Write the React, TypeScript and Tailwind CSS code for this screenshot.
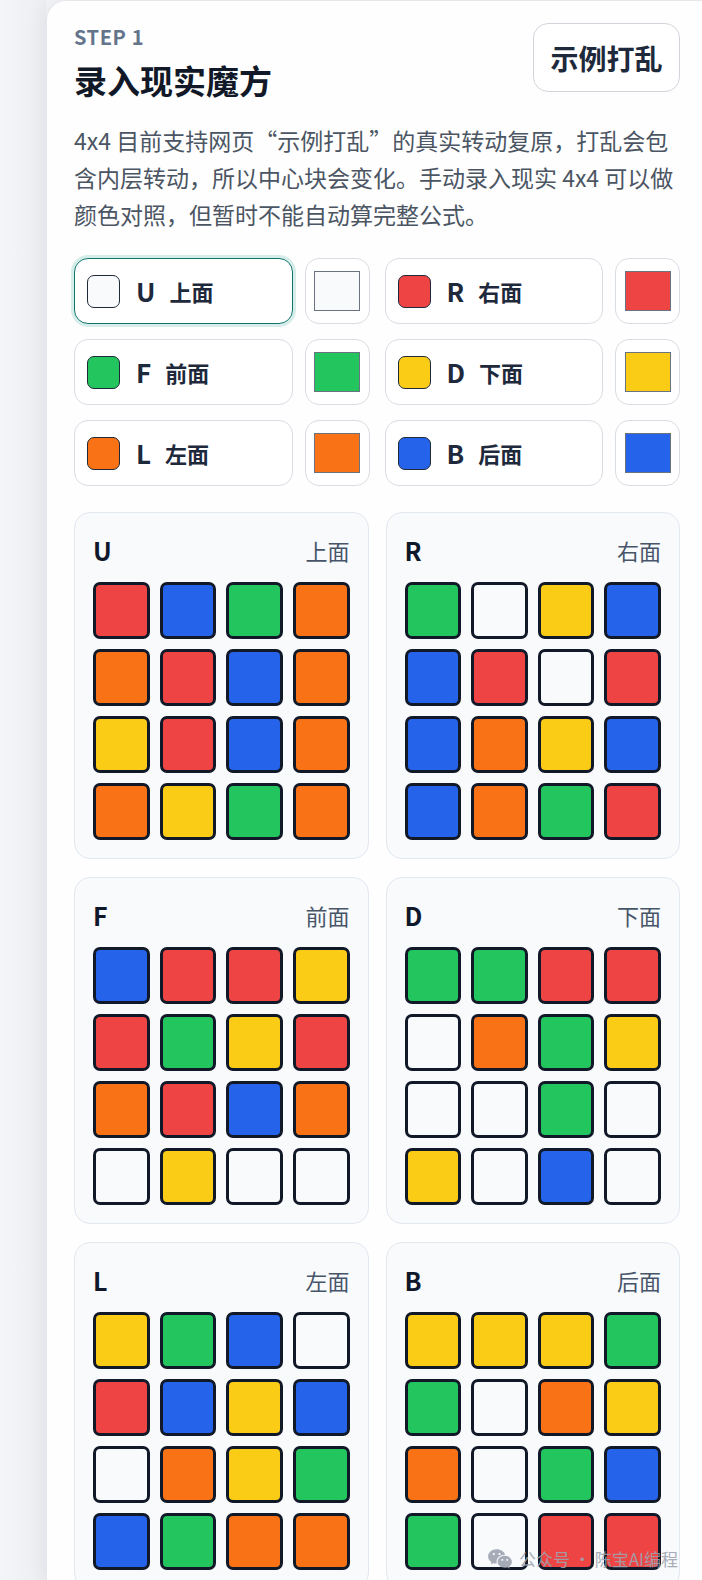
import React, { useState } from 'react';
import { RiWechatFill } from 'react-icons/ri';

type Color = 'W' | 'R' | 'G' | 'Y' | 'O' | 'B';

const FILL: Record<Color, string> = {
  W: 'bg-[#f8fafc]',
  R: 'bg-[#ef4444]',
  G: 'bg-[#22c55e]',
  Y: 'bg-[#facc15]',
  O: 'bg-[#f97316]',
  B: 'bg-[#2563eb]',
};

// face picker entries
const FACES: { key: string; name: string; color: Color }[] = [
  { key: 'U', name: '上面', color: 'W' },
  { key: 'R', name: '右面', color: 'R' },
  { key: 'F', name: '前面', color: 'G' },
  { key: 'D', name: '下面', color: 'Y' },
  { key: 'L', name: '左面', color: 'O' },
  { key: 'B', name: '后面', color: 'B' },
];

// scrambled 4x4 state, row by row
const STATE: Record<string, string> = {
  U: 'RBGO' + 'ORBO' + 'YRBO' + 'OYGO',
  R: 'GWYB' + 'BRWR' + 'BOYB' + 'BOGR',
  F: 'BRRY' + 'RGYR' + 'ORBO' + 'WYWW',
  D: 'GGRR' + 'WOGY' + 'WWGW' + 'YWBW',
  L: 'YGBW' + 'RBYB' + 'WOYG' + 'BGOO',
  B: 'YYYG' + 'GWOY' + 'OWGB' + 'GWRR',
};

const FacePanel: React.FC<{ face: string; name: string }> = ({ face, name }) => {
  const cells = STATE[face].split('') as Color[];
  return (
    <div className="rounded-[16px] border border-[#e2e8f0] bg-[#f8fafc] px-[18px] pt-[22px] pb-[18px]">
      <div className="flex items-center justify-between h-[30px]">
        <span className="text-[25px] font-bold text-[#0f172a] leading-none">{face}</span>
        <span className="text-[22px] text-[#475569] leading-none">{name}</span>
      </div>
      <div className="mt-[17px] grid grid-cols-4 gap-[10px]">
        {cells.map((c, i) => (
          <div
            key={i}
            className={`h-[57px] rounded-[7px] border-[3px] border-[#111827] ${FILL[c]}`}
          />
        ))}
      </div>
    </div>
  );
};

export default function App() {
  const [active, setActive] = useState('U');

  return (
    <div
      className="relative flex h-[1580px] bg-[#f2f4f7] overflow-hidden"
      style={{ fontFamily: '"Noto Sans CJK SC", "Noto Sans", sans-serif' }}
    >
      <div className="w-[46px] shrink-0 bg-gradient-to-r from-[#f4f5f8] to-[#eceef2]" />

      {/* Step card */}
      <div className="flex-1 rounded-tl-[20px] border-l border-t border-[#e5e7eb] bg-[#fefefe] pl-[27px] pr-[22px] pt-[24px] shadow-[-4px_0_18px_rgba(15,23,42,0.05)]">
        <div className="flex items-start justify-between">
          <div>
            <div className="text-[20px] leading-[24px] font-bold tracking-[0.03em] text-[#64748b]">STEP 1</div>
            <h1 className="mt-[8px] text-[33px] leading-[46px] font-bold text-[#111827]">录入现实魔方</h1>
          </div>
          <button className="-mt-[2px] h-[69px] w-[147px] rounded-[15px] border border-[#d1d5db] bg-white text-[28px] font-bold text-[#1e293b]">
            示例打乱
          </button>
        </div>

        <p className="mt-[19px] text-[23px] leading-[37px] text-[#4b5563]">
          4x4 目前支持网页“示例打乱”的真实转动复原，打乱会包含内层转动，所以中心块会变化。手动录入现实 4x4 可以做颜色对照，但暂时不能自动算完整公式。
        </p>

        {/* Face picker */}
        <div className="mt-[25px] grid grid-cols-2 gap-x-[15px] gap-y-[15px]">
          {FACES.map(f => {
            const isActive = active === f.key;
            return (
              <div key={f.key} className="flex gap-[12px]">
                <button
                  onClick={() => setActive(f.key)}
                  className={`flex h-[66px] flex-1 items-center rounded-[14px] bg-white pl-[12px] ${
                    isActive
                      ? 'border-[1.5px] border-[#0f766e] ring-[3px] ring-[#d6ede9]'
                      : 'border border-[#d8dde3]'
                  }`}
                >
                  <span className={`h-[33px] w-[33px] rounded-[7px] border border-[#1f2937] ${FILL[f.color]}`} />
                  <span className="ml-[16px] text-[26px] font-bold text-[#1e293b] leading-none">{f.key}</span>
                  <span className="ml-[14px] text-[22px] font-bold text-[#1e293b] leading-none">{f.name}</span>
                </button>
                <div className="flex h-[66px] w-[65px] items-center justify-center rounded-[14px] border border-[#d8dde3] bg-white">
                  <div className={`h-[40px] w-[46px] border border-[#6b7280] ${FILL[f.color]}`} />
                </div>
              </div>
            );
          })}
        </div>

        {/* Face grids */}
        <div className="mt-[26px] grid grid-cols-2 gap-x-[17px] gap-y-[18px]">
          {FACES.map(f => (
            <FacePanel key={f.key} face={f.key} name={f.name} />
          ))}
        </div>
      </div>

      {/* watermark */}
      <div className="absolute right-[24px] bottom-[8px] flex items-center gap-[6px] text-[17px] leading-[24px] text-[#9ca3af]/90">
        <RiWechatFill className="h-[26px] w-[26px]" />
        <span>公众号 · 陈宝AI编程</span>
      </div>
    </div>
  );
}
